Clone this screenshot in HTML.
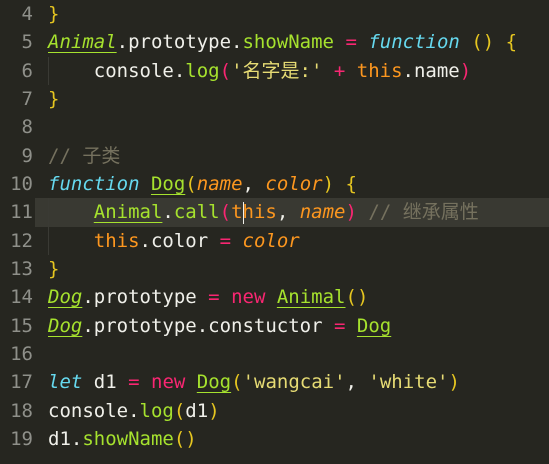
<!DOCTYPE html>
<html><head><meta charset="utf-8"><style>
body{margin:0;width:549px;height:464px;background:#262620;overflow:hidden;font-family:"DejaVu Sans Mono","Liberation Mono","Noto Sans CJK SC",monospace;font-size:19px;}
.l{position:absolute;left:0;width:549px;height:28.33px;line-height:28.33px;white-space:pre;color:#f0f0ea;}
.n{position:absolute;left:0;width:33px;text-align:right;color:#8f908a;}
.c{position:absolute;left:48px;}
.hl{background:#3a3a33;left:35px;width:514px;}
.k{color:#66d9ef;font-style:italic}
.g{color:#a6e22e}
.u{text-decoration:underline;text-underline-offset:4px}
.i{font-style:italic}
.o{color:#fd971f}
.p{color:#f92672}
.s{color:#e6db74}
.y{color:#e6c620}
.cm{color:#75715e}
.gd{position:absolute;left:48px;width:1px;background:#3a3a34;}
</style></head><body>
<div style="position:absolute;left:35px;top:198.3px;width:514px;height:28.33px;background:#393932"></div>
<div class="gd" style="top:56.7px;height:28.3px"></div>
<div class="gd" style="top:198.3px;height:56.7px"></div>
<div class="l" style="top:0"><span class="n">4</span><span class="c"><span class="y">}</span></span></div>
<div class="l" style="top:28.33px"><span class="n">5</span><span class="c"><span class="g i u">Animal</span>.prototype.<span class="g">showName</span> <span class="p">=</span> <span class="k">function</span> <span class="y">()</span> <span class="y">{</span></span></div>
<div class="l" style="top:56.67px"><span class="n">6</span><span class="c">    console.<span class="g">log</span><span class="p">(</span><span class="s">'名字是:'</span> <span class="p">+</span> <span class="o">this</span>.name<span class="p">)</span></span></div>
<div class="l" style="top:85px"><span class="n">7</span><span class="c"><span class="y">}</span></span></div>
<div class="l" style="top:113.33px"><span class="n">8</span></div>
<div class="l" style="top:141.67px"><span class="n">9</span><span class="c"><span class="cm">// 子类</span></span></div>
<div class="l" style="top:170px"><span class="n">10</span><span class="c"><span class="k">function</span> <span class="g u">Dog</span><span class="y">(</span><span class="o i">name</span>, <span class="o i">color</span><span class="y">)</span> <span class="y">{</span></span></div>
<div class="l" style="top:198.33px"><span class="n">11</span><span class="c">    <span class="g u">Animal</span>.<span class="g">call</span><span class="p">(</span><span class="o">this</span>, <span class="o i">name</span><span class="p">)</span> <span class="cm">// 继承属性</span></span></div>
<div class="l" style="top:226.67px"><span class="n">12</span><span class="c">    <span class="o">this</span>.color <span class="p">=</span> <span class="o i">color</span></span></div>
<div class="l" style="top:255px"><span class="n">13</span><span class="c"><span class="y">}</span></span></div>
<div class="l" style="top:283.33px"><span class="n">14</span><span class="c"><span class="g i u">Dog</span>.prototype <span class="p">=</span> <span class="p">new</span> <span class="g u">Animal</span><span class="y">()</span></span></div>
<div class="l" style="top:311.67px"><span class="n">15</span><span class="c"><span class="g i u">Dog</span>.prototype.constuctor <span class="p">=</span> <span class="g u">Dog</span></span></div>
<div class="l" style="top:340px"><span class="n">16</span></div>
<div class="l" style="top:368.33px"><span class="n">17</span><span class="c"><span class="k">let</span> d1 <span class="p">=</span> <span class="p">new</span> <span class="g u">Dog</span><span class="y">(</span><span class="s">'wangcai'</span>, <span class="s">'white'</span><span class="y">)</span></span></div>
<div class="l" style="top:396.67px"><span class="n">18</span><span class="c">console.<span class="g">log</span><span class="y">(</span>d1<span class="y">)</span></span></div>
<div class="l" style="top:425px"><span class="n">19</span><span class="c">d1.<span class="g">showName</span><span class="y">()</span></span></div>
<div style="position:absolute;left:243px;top:202px;width:1px;height:22px;background:#f0f0ea"></div>
</body></html>
